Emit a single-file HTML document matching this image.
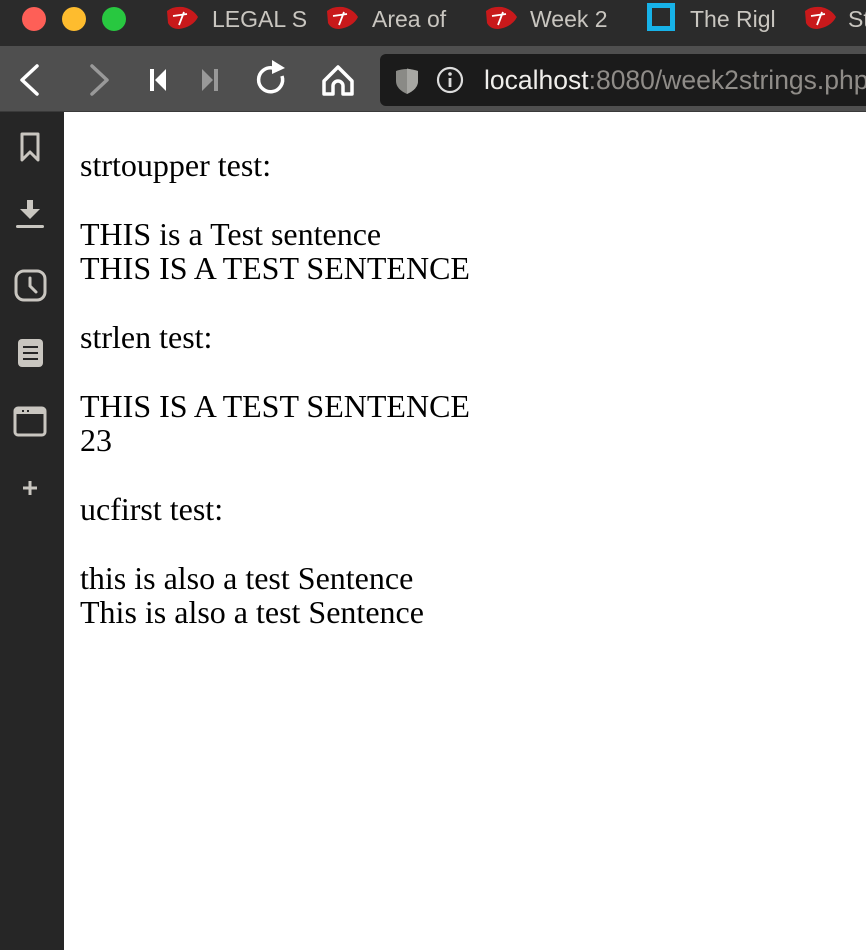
<!DOCTYPE html>
<html><head><meta charset="utf-8"><style>
*{margin:0;padding:0;box-sizing:border-box}
body{width:866px;height:950px;overflow:hidden;background:#fff;position:relative;font-family:"Liberation Sans",sans-serif}
#title{position:absolute;left:0;top:0;width:866px;height:46px;background:#2b2b2b}
.dot{position:absolute;top:7px;width:24px;height:24px;border-radius:50%}
.tab{position:absolute;top:4px;height:30px;color:#c9c6c0;font-size:23px;line-height:30px;white-space:nowrap}
.logo{position:absolute;top:5px;width:34px;height:26px}
#tool{position:absolute;left:0;top:46px;width:866px;height:66px;background:#4f4f4f;border-bottom:1px solid #3a3a3a}
#addr{position:absolute;left:380px;top:54px;width:486px;height:52px;background:#1b1b1b;border-radius:6px 0 0 6px}
#url{position:absolute;left:484px;top:63px;font-size:26.5px;line-height:34px;color:#8f8c88;white-space:nowrap}
#side{position:absolute;left:0;top:112px;width:64px;height:838px;background:#262626}
#content{position:absolute;left:80px;top:148px;font-family:"Liberation Serif",serif;font-size:32px;line-height:34.4px;color:#000}
</style></head><body>
<div id="title">
<div class="dot" style="left:22px;background:#fe5f57"></div>
<div class="dot" style="left:62px;background:#febc2e"></div>
<div class="dot" style="left:102px;background:#28c840"></div>
<svg class="logo" style="left:165px" viewBox="0 0 34 26"><path d="M2 6 Q8 1 18 2 Q28 4 33 12 Q28 22 14 24 Q6 24 3 18Z" fill="#c8191b"/><path d="M8 11 L22 9 M14 20 L19 7" stroke="#fff" stroke-width="1.8"/></svg>
<div class="tab" style="left:212px">LEGAL S</div>
<svg class="logo" style="left:325px" viewBox="0 0 34 26"><path d="M2 6 Q8 1 18 2 Q28 4 33 12 Q28 22 14 24 Q6 24 3 18Z" fill="#c8191b"/><path d="M8 11 L22 9 M14 20 L19 7" stroke="#fff" stroke-width="1.8"/></svg>
<div class="tab" style="left:372px">Area of</div>
<svg class="logo" style="left:484px" viewBox="0 0 34 26"><path d="M2 6 Q8 1 18 2 Q28 4 33 12 Q28 22 14 24 Q6 24 3 18Z" fill="#c8191b"/><path d="M8 11 L22 9 M14 20 L19 7" stroke="#fff" stroke-width="1.8"/></svg>
<div class="tab" style="left:530px">Week 2</div>
<div style="position:absolute;left:647px;top:3px;width:28px;height:28px;border:5px solid #17b2e8"></div>
<div class="tab" style="left:690px">The Rigl</div>
<svg class="logo" style="left:803px" viewBox="0 0 34 26"><path d="M2 6 Q8 1 18 2 Q28 4 33 12 Q28 22 14 24 Q6 24 3 18Z" fill="#c8191b"/><path d="M8 11 L22 9 M14 20 L19 7" stroke="#fff" stroke-width="1.8"/></svg>
<div class="tab" style="left:848px">St</div>
</div>
<div id="tool">
<svg style="position:absolute;left:0;top:0" width="380" height="66" viewBox="0 0 380 66">
<path d="M37 20 L22 34 L37 48" fill="none" stroke="#fff" stroke-width="3.5" stroke-linecap="round" stroke-linejoin="round"/>
<path d="M92 20 L107 34 L92 48" fill="none" stroke="#999" stroke-width="3.5" stroke-linecap="round" stroke-linejoin="round"/>
<rect x="150" y="23" width="4" height="22" fill="#fff"/><path d="M166 23 L155 34 L166 45Z" fill="#fff"/>
<rect x="214" y="23" width="4" height="22" fill="#999"/><path d="M202 23 L213 34 L202 45Z" fill="#999"/>
<path d="M282 30 A12 12 0 1 1 273 22" fill="none" stroke="#fff" stroke-width="3.5"/><path d="M272 14 L285 22 L272 28Z" fill="#fff"/>
<path d="M324 35 L338 21 L352 35 V48 H343 V40 A5 5 0 0 0 333 40 V48 H324Z" fill="none" stroke="#fff" stroke-width="3.5" stroke-linejoin="round"/>
</svg>
</div>
<div id="addr">
<svg style="position:absolute;left:14px;top:13px" width="26" height="28" viewBox="0 0 26 28"><path d="M2 4 Q13 0 24 4 V14 Q24 22 13 27 Q2 22 2 14Z" fill="#8a8a86"/><path d="M13 1.5 V27 Q24 22 24 14 V4Z" fill="#a7a7a3"/></svg>
<svg style="position:absolute;left:56px;top:12px" width="28" height="28" viewBox="0 0 28 28"><circle cx="14" cy="14" r="12" fill="none" stroke="#ddd" stroke-width="2.2"/><rect x="12.6" y="12" width="2.8" height="9" fill="#ddd"/><circle cx="14" cy="8" r="1.8" fill="#ddd"/></svg>
</div>
<div id="url"><span style="color:#f0efec">localhost</span>:8080/week2strings.php</div>
<div id="side">
<svg width="64" height="400" viewBox="0 0 64 400">
<path d="M22 22 H38 V48 L30 40 L22 48Z" fill="none" stroke="#c9c6c0" stroke-width="3" stroke-linejoin="round"/>
<rect x="27" y="88" width="6" height="10" fill="#c9c6c0"/><path d="M20 97 H40 L30 107Z" fill="#c9c6c0"/><rect x="16" y="113" width="28" height="3" rx="1.5" fill="#c9c6c0"/>
<rect x="16" y="159" width="29" height="29" rx="8" fill="none" stroke="#c9c6c0" stroke-width="3"/><path d="M30 166 V174 L36 180" fill="none" stroke="#c9c6c0" stroke-width="3" stroke-linecap="round"/>
<rect x="18" y="227" width="25" height="28" rx="4" fill="#c9c6c0"/><path d="M23 235 H38 M23 241 H38 M23 247 H38" stroke="#262626" stroke-width="2"/>
<rect x="15" y="296" width="30" height="27" rx="3" fill="none" stroke="#c9c6c0" stroke-width="3"/><rect x="15" y="296" width="30" height="6" fill="#c9c6c0"/><path d="M22 299 H24 M27 299 H29" stroke="#262626" stroke-width="2"/>
<path d="M30 369 V383 M23 376 H37" stroke="#c9c6c0" stroke-width="3"/>
</svg>
</div>
<div id="content">strtoupper test:<br><br>THIS is a Test sentence<br>THIS IS A TEST SENTENCE<br><br>strlen test:<br><br>THIS IS A TEST SENTENCE<br>23<br><br>ucfirst test:<br><br>this is also a test Sentence<br>This is also a test Sentence</div>
</body></html>
